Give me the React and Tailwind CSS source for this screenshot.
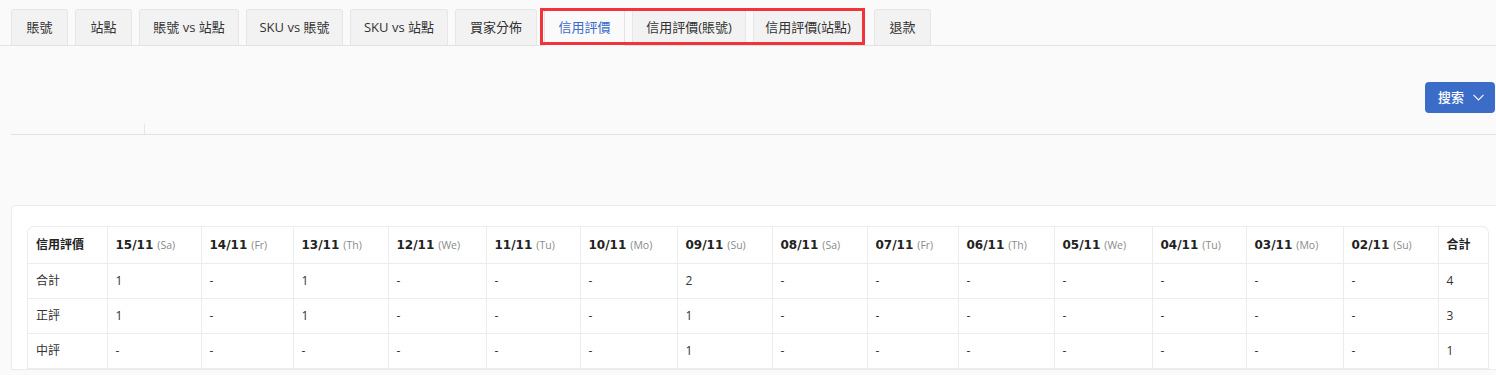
import React from "react";

const tabs = [
  { label: "賬號", w: 57 },
  { label: "站點", w: 57 },
  { label: "賬號 vs 站點", w: 100 },
  { label: "SKU vs 賬號", w: 97 },
  { label: "SKU vs 站點", w: 98 },
  { label: "買家分佈", w: 82 },
  { label: "信用評價", w: 81, active: true },
  { label: "信用評價(賬號)", w: 114 },
  { label: "信用評價(站點)", w: 110 },
  { label: "退款", w: 57, extra: true },
];

const cols = [
  ["15/11", "Sa"], ["14/11", "Fr"], ["13/11", "Th"], ["12/11", "We"], ["11/11", "Tu"],
  ["10/11", "Mo"], ["09/11", "Su"], ["08/11", "Sa"], ["07/11", "Fr"], ["06/11", "Th"],
  ["05/11", "We"], ["04/11", "Tu"], ["03/11", "Mo"], ["02/11", "Su"],
];
const widths = [80, 94, 92, 95, 98, 94, 97, 95, 95, 91, 96, 98, 94, 97, 95, 50];

const rows = [
  ["合計", ["1", "-", "1", "-", "-", "-", "2", "-", "-", "-", "-", "-", "-", "-"], "4"],
  ["正評", ["1", "-", "1", "-", "-", "-", "1", "-", "-", "-", "-", "-", "-", "-"], "3"],
  ["中評", ["-", "-", "-", "-", "-", "-", "1", "-", "-", "-", "-", "-", "-", "-"], "1"],
];

const font = { fontFamily: '"Open Sans","Noto Sans CJK TC",sans-serif' };

export default function App() {
  return (
    <div className="w-[1496px] h-[375px] bg-[#fafafa] overflow-hidden text-[#333]" style={font}>
      {/* Tabs */}
      <div className="relative flex items-end pl-[11px] pt-[9px] border-b border-[#e3e3e3] h-[46px]">
        {tabs.map((t, i) => (
          <div
            key={i}
            style={{ width: t.w }}
            className={
              "h-[36px] flex items-center justify-center text-[13px] rounded-t-[3px] border border-b-0 shrink-0 " +
              (t.active
                ? "bg-[#fafafa] text-[#3b6cc9] border-[#e3e3e3] -mb-px h-[37px] pb-px"
                : "bg-[#f2f2f2] border-[#e6e6e6]") +
              (i < tabs.length - 1 ? (i === 8 ? " mr-[11px]" : " mr-[7px]") : "")
            }
          >
            {t.label}
          </div>
        ))}
        <div className="absolute left-[540px] top-[8px] w-[325px] h-[37px] border-[3px] border-[#f0343a] pointer-events-none" />
      </div>

      {/* Search area */}
      <div className="ml-[11px] h-[89px] border-b border-[#e3e3e3] relative flex justify-end items-start pt-[36px] pr-px">
        <button className="w-[70px] h-[31px] bg-[#3b6cc8] rounded-[4px] text-white text-[13px] flex items-center justify-center gap-[9px] pl-[2px]">
          <span className="font-medium">搜索</span>
          <svg width="11" height="7" viewBox="0 0 11 7" fill="none">
            <path d="M0.5 0.8 L5.5 6 L10.5 0.8" stroke="white" strokeWidth="1.1" />
          </svg>
        </button>
        <div className="absolute left-[133px] bottom-0 w-px h-[10px] bg-[#e6e6e6]" />
      </div>

      {/* Card */}
      <div className="mt-[70px] ml-[11px] w-[1500px] bg-white border border-[#ebebeb] rounded-tl-[4px] pt-[20px] pl-[15px]">
        <div className="w-[1462px] border-l border-t border-r border-[#ececec] rounded-t-[7px] overflow-hidden">
          <table className="border-collapse table-fixed text-[12px]" style={{ width: 1460 }}>
            <colgroup>
              {widths.map((w, i) => (
                <col key={i} style={{ width: i === 0 ? w - 1 : w }} />
              ))}
            </colgroup>
            <thead>
              <tr className="h-[36px]">
                <th className="text-left font-semibold pl-[8px] border-r border-b border-[#ececec] text-[12px] text-[#222]">信用評價</th>
                {cols.map(([d, day], i) => (
                  <th key={i} className="text-left pl-[8px] border-r border-b border-[#ececec] font-normal whitespace-nowrap">
                    <span className="font-bold text-[12px] text-[#222]" style={{ fontFamily: '"DejaVu Sans",sans-serif' }}>{d}</span>
                    <span className="text-[10.5px] text-[#8a8a8a] ml-[4px]">({day})</span>
                  </th>
                ))}
                <th className="text-left font-semibold pl-[8px] border-b border-[#ececec] text-[12px] text-[#222]">合計</th>
              </tr>
            </thead>
            <tbody>
              {rows.map(([name, vals, total], r) => (
                <tr key={r} className="h-[35px]">
                  <td className="pl-[8px] border-r border-b border-[#ececec]">{name}</td>
                  {vals.map((v, i) => (
                    <td key={i} className="pl-[8px] border-r border-b border-[#ececec]">{v}</td>
                  ))}
                  <td className="pl-[8px] border-b border-[#ececec]">{total}</td>
                </tr>
              ))}
            </tbody>
          </table>
        </div>
      </div>
    </div>
  );
}
